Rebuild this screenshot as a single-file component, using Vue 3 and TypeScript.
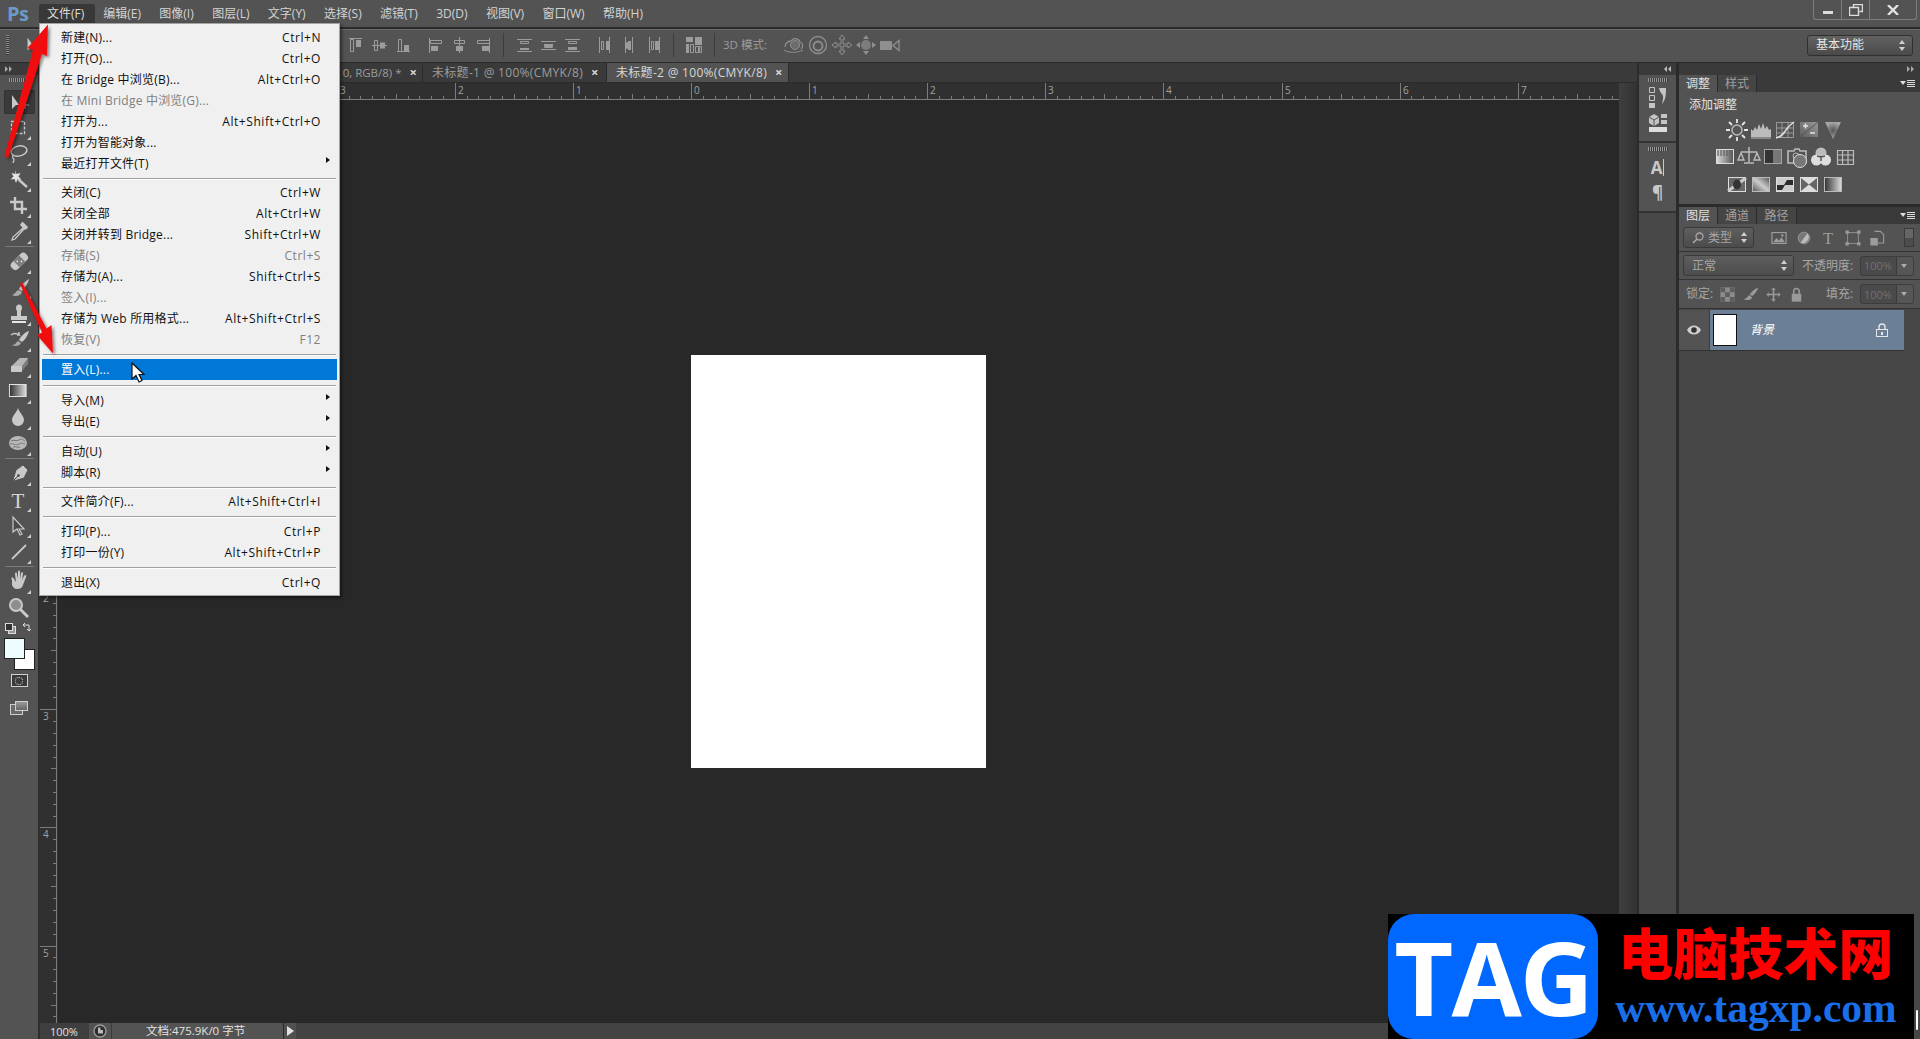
<script setup lang="ts">
interface MenuRow { label?: string; key?: string; off?: boolean; sub?: boolean; active?: boolean; sep?: number }
const menus = ['编辑(E)', '图像(I)', '图层(L)', '文字(Y)', '选择(S)', '滤镜(T)', '3D(D)', '视图(V)', '窗口(W)', '帮助(H)']
const menuRows: MenuRow[] = [
  { label: '新建(N)...', key: 'Ctrl+N' },
  { label: '打开(O)...', key: 'Ctrl+O' },
  { label: '在 Bridge 中浏览(B)...', key: 'Alt+Ctrl+O' },
  { label: '在 Mini Bridge 中浏览(G)...', off: true },
  { label: '打开为...', key: 'Alt+Shift+Ctrl+O' },
  { label: '打开为智能对象...' },
  { label: '最近打开文件(T)', sub: true },
  { sep: 8 },
  { label: '关闭(C)', key: 'Ctrl+W' },
  { label: '关闭全部', key: 'Alt+Ctrl+W' },
  { label: '关闭并转到 Bridge...', key: 'Shift+Ctrl+W' },
  { label: '存储(S)', key: 'Ctrl+S', off: true },
  { label: '存储为(A)...', key: 'Shift+Ctrl+S' },
  { label: '签入(I)...', off: true },
  { label: '存储为 Web 所用格式...', key: 'Alt+Shift+Ctrl+S' },
  { label: '恢复(V)', key: 'F12', off: true },
  { sep: 9 },
  { label: '置入(L)...', active: true },
  { sep: 10 },
  { label: '导入(M)', sub: true },
  { label: '导出(E)', sub: true },
  { sep: 9 },
  { label: '自动(U)', sub: true },
  { label: '脚本(R)', sub: true },
  { sep: 8 },
  { label: '文件简介(F)...', key: 'Alt+Shift+Ctrl+I' },
  { sep: 9 },
  { label: '打印(P)...', key: 'Ctrl+P' },
  { label: '打印一份(Y)', key: 'Alt+Shift+Ctrl+P' },
  { sep: 9 },
  { label: '退出(X)', key: 'Ctrl+Q' }
]

const L = '#c9c9c9'
const corner = `<path d="M24 20v4h-4z" fill="#cfcfcf"/>`
type Tool = { svg: string } | { sep: true }
const tools: Tool[] = [
  { svg: `<path d="M5 5v14l4-4 3 0z" fill="${L}"/><path d="M14 15h8M18 11v8" stroke="#8d8d8d" stroke-width="1.4"/>` },
  { svg: `<rect x="4.500" y="5.500" width="13" height="12" fill="none" stroke="${L}" stroke-width="1.300" stroke-dasharray="3 1.500"/>${corner}` },
  { svg: `<ellipse cx="12" cy="9" rx="8" ry="5" fill="none" stroke="${L}" stroke-width="1.500" transform="rotate(-12 12 9)"/><path d="M6 13c-2 3 1 3 1 5 0 1-1 2-1 3" fill="none" stroke="${L}" stroke-width="1.300"/>${corner}` },
  { svg: `<path d="M8 2l1.500 4 4-1-2 3.500 3 3-4-.5-1.500 4-1.500-4-4 .5 3-3-2-3.500 4 1z" fill="#e4e4e4"/><path d="M11 11l9 8" stroke="${L}" stroke-width="2.400"/>${corner}` },
  { svg: `<path d="M8 3v12h12M3 8h12v12" fill="none" stroke="${L}" stroke-width="2.400"/>${corner}` },
  { svg: `<path d="M16 3l4 4-3 2-1 1-8 9-3 1 1-3 9-8 1-1z" fill="none" stroke="${L}" stroke-width="1.300"/><path d="M15 2l6 6-3 2-5-5z" fill="${L}"/>${corner}` },
  { sep: true },
  { svg: `<g transform="rotate(-45 12 11)"><rect x="2" y="7" width="20" height="9" rx="4" fill="${L}"/><rect x="8" y="7" width="8" height="9" fill="#7d7d7d"/><circle cx="10.500" cy="10" r=".8" fill="#eee"/><circle cx="13.500" cy="13" r=".8" fill="#eee"/></g>${corner}` },
  { svg: `<path d="M22 3c-3 2-8 6-10 10l3 2c3-3 6-8 7-12z" fill="${L}"/><path d="M12 14c-3 0-3 4-7 5 3 2 9 1 10-3z" fill="#aaa"/>${corner}` },
  { svg: `<ellipse cx="12" cy="6" rx="3" ry="3.500" fill="${L}"/><rect x="10" y="8" width="4" height="6" fill="${L}"/><path d="M4 14h16v4H4z" fill="${L}"/><rect x="5" y="19" width="14" height="2" fill="#e6e6e6"/>${corner}` },
  { svg: `<path d="M22 3c-4 1-8 5-10 9l3 2c3-2 6-7 7-11z" fill="${L}"/><path d="M11 13c-2 1-2 4-6 4 3 2 8 1 9-2z" fill="#aaa"/><path d="M4 7c2-2 6-2 8 0l-2 0M12 7V4" fill="none" stroke="${L}" stroke-width="1.500"/>${corner}` },
  { svg: `<path d="M13 4h8l-6 8H4v1z" fill="#e2e2e2"/><path d="M13 4l-9 8v6h10l7-8V4z" fill="#9a9a9a" opacity=".6"/><path d="M4 12h11v6H4z" fill="${L}"/>${corner}` },
  { svg: `<defs><linearGradient id="tg" x1="0" x2="1"><stop offset="0" stop-color="#2d2d2d"/><stop offset="1" stop-color="#dedede"/></linearGradient></defs><rect x="2.500" y="4.500" width="17" height="12" transform="scale(.98 1)" fill="url(#tg)" stroke="#e2e2e2"/>${corner}` },
  { svg: `<path d="M11 2c1 4 6 8 6 12a6 6 0 0 1-12 0c0-4 5-8 6-12z" fill="${L}"/>${corner}` },
  { svg: `<ellipse cx="11" cy="11" rx="9" ry="7" fill="#b8b8b8"/><path d="M4 9c3-2 5 1 8-1s4 0 6 1M3 12c4-1 5 2 9 0s4 0 6 0M6 15c3-1 4 1 7 0" stroke="#777" fill="none"/>${corner}` },
  { sep: true },
  { svg: `<path d="M16 3l5 5-4 8-10 3-3 2 2-3 3-10z" fill="${L}" stroke="#555"/><path d="M5 20l6-6" stroke="#444"/><circle cx="11.500" cy="13.500" r="1.300" fill="#444"/>${corner}` },
  { svg: `<text x="11" y="20" text-anchor="middle" font-family="Liberation Serif,serif" font-size="21" fill="#d6d6d6">T</text>${corner}` },
  { svg: `<path d="M6 3v15l4-3 3 6 2-1-3-5h5z" fill="#4b4b4b" stroke="${L}" stroke-width="1.200"/>${corner}` },
  { svg: `<path d="M5 19L19 5" stroke="${L}" stroke-width="1.800"/>${corner}` },
  { sep: true },
  { svg: `<path d="M5 10c-2-3 1-3 2-1l2 3-1-8c0-2 2-2 2 0l1 5V2c0-2 2-2 2 0v7l1-6c1-2 2-1 2 1l-1 6 2-4c1-2 3-1 2 1l-3 8c-1 3-3 4-6 4s-4-2-5-4z" fill="${L}"/>${corner}` },
  { svg: `<circle cx="9" cy="9" r="6" fill="#8e8e8e" stroke="${L}" stroke-width="2"/><path d="M13 13l8 8" stroke="${L}" stroke-width="3"/>` }
]

const A = '#9c9c9c'
const al = (d: string, fill: string, outline: string) => `<path d="${d}" stroke="${A}" fill="none"/><path d="${fill}" fill="${A}"/><path d="${outline}" fill="none" stroke="${A}"/>`
const alignA = [
  al('M6 5.500h13', 'M13 7h5v7h-5z', 'M7.500 6.500h3v12h-3z'),
  al('M5 12.500h15', 'M13 9.500h5v6h-5z', 'M7.500 7.500h3v10h-3z'),
  al('M6 18.500h13', 'M13 12h5v6h-5z', 'M7.500 6.500h3v12h-3z'),
  al('M6.500 5v15', 'M8 13h7v5H8z', 'M7.500 7.500h11v3h-11z'),
  al('M12.500 4v16', 'M9 13h7v5H9z', 'M7.500 7.500h10v3h-10z'),
  al('M18.500 5v15', 'M11 13h7v5h-7z', 'M6.500 7.500h12v3h-12z')
]
const alignB = [
  al('M5 6.500h15M5 18.500h15', 'M8 15h9v2H8z', 'M8.500 8.500h8v2h-8z'),
  al('M5 8.500h15M5 16.500h15', 'M8 11h9v2H8z', 'M8.500 13.500h8v1h-8z'),
  al('M5 6.500h15M5 18.500h15', 'M8 14h9v3H8z', 'M8.500 8.500h8v2h-8z'),
  al('M6.500 4v16M16.500 4v16', 'M13 8h3v9h-3z', 'M8.500 8.500h2v8h-2z'),
  al('M8.500 4v16M15.500 4v16', 'M11 8h3v9h-3z', 'M9.500 9.500h1v6h-1z'),
  al('M8.500 4v16M18.500 4v16', 'M14 8h4v9h-4z', 'M10.500 8.500h2v8h-2z')
]
const autoAlign = `<path d="M4 4h7v5H4zM13 4h7v8h-7zM4 11h3v9H4z" fill="${A}"/><path d="M8.500 11.500h3v8h-3zM13.500 13.500h3v6h-3zM17.500 13.500h2v6h-2z" fill="none" stroke="${A}"/>`
const M = '#8f8f8f'
const mode3d = [
  `<path d="M3 14a6 6 0 0 1 6-6 5 5 0 0 1 9 1 4 4 0 0 1 1 7" fill="none" stroke="${M}" stroke-width="1.300"/><circle cx="13" cy="12" r="4.500" fill="#6c6c6c" stroke="${M}"/><path d="M2 17c4 3 14 3 19 0" fill="none" stroke="${M}"/>`,
  `<circle cx="12" cy="12" r="8.500" fill="none" stroke="${M}" stroke-width="1.300"/><circle cx="12" cy="13" r="4.500" fill="none" stroke="${M}" stroke-width="1.800"/>`,
  `<path d="M12 2l3 4h-2v5h5V9l4 3-4 3v-2h-5v5h2l-3 4-3-4h2v-5H6v2l-4-3 4-3v2h5V6H9z" fill="none" stroke="${M}"/>`,
  `<path d="M12 2l3 4h-6zM12 22l-3-4h6zM2 12l4-3v6zM22 12l-4 3V9z" fill="${M}"/><circle cx="12" cy="12" r="5" fill="#7c7c7c"/>`,
  `<rect x="2" y="8" width="12" height="9" rx="1" fill="${M}"/><path d="M15 12.500l6-5v10z" fill="none" stroke="${M}" stroke-width="1.300"/>`
]

const P = '#bcbcbc'
const adj1 = [
  `<circle cx="12" cy="12" r="5" fill="#555" stroke="${P}" stroke-width="1.500"/><path d="M12 1v4M12 19v4M1 12h4M19 12h4M4 4l3 3M17 17l3 3M20 4l-3 3M7 17l-3 3" stroke="#e6e6e6" stroke-width="1.800"/>`,
  `<path d="M2 19v-8l2 2 2-4 2 3 2-6 2 5 2-6 2 6 2-3 2 4 2-1v8z" fill="${P}"/><rect x="2" y="19" width="20" height="2" fill="#888"/>`,
  `<path d="M3.500 4.500h17v15h-17zM9 4v16M15 4v16M3 10h18M3 15h18" fill="none" stroke="#9a9a9a"/><path d="M3 20c6-1 8-5 10-8s5-6 8-8" fill="none" stroke="#e4e4e4" stroke-width="1.500"/>`,
  `<rect x="3" y="4" width="18" height="15" fill="url(#pg1)"/><path d="M6 8h5M8.500 5.500v5M13 15h5" stroke="#e2e2e2" stroke-width="1.500"/><path d="M3 19L21 4" stroke="#555"/>`,
  `<path d="M4 4h16l-8 17z" fill="url(#pg2)"/>`
]
const adj2 = [
  `<rect x="3.500" y="4.500" width="17" height="14" fill="url(#pg3)" stroke="#ddd"/><path d="M5 5v6M8 5v6M11 5v6M14 5v6M17 5v6" stroke="#666" stroke-width="1.300"/>`,
  `<path d="M12 2v15M4 7h16M7 18h10" stroke="${P}" stroke-width="1.500"/><path d="M4 8l-3 7h6zM20 8l-3 7h6z" fill="none" stroke="${P}" stroke-width="1.400"/>`,
  `<rect x="3.500" y="4.500" width="17" height="14" fill="#777" stroke="#a6a6a6"/><rect x="4" y="5" width="8" height="13" fill="#333"/>`,
  `<path d="M3 6h6l1-2h4l1 2h6v12H3z" fill="none" stroke="${P}" stroke-width="1.600"/><circle cx="11" cy="11" r="3" fill="none" stroke="${P}"/><circle cx="15" cy="16" r="6.500" fill="#777" stroke="#ddd"/>`,
  `<circle cx="12" cy="8" r="5.500" fill="${P}"/><circle cx="7.500" cy="15" r="5.500" fill="#dedede"/><circle cx="16.500" cy="15" r="5.500" fill="#dedede"/><path d="M12 12v4M8 11l4 1 4-1" stroke="#555" stroke-width="1.500"/>`,
  `<path d="M4.500 5.500h16v14h-16zM9.500 5v15M15 5v15M4 10h17M4 15h17" fill="none" stroke="${P}" stroke-width="1.200"/>`
]
const adj3 = [
  `<rect x="3.500" y="4.500" width="17" height="14" fill="#666" stroke="#ddd"/><path d="M3 18L21 5" stroke="#ccc" stroke-width="3"/><ellipse cx="12" cy="11.500" rx="4" ry="5" fill="#333"/>`,
  `<rect x="3.500" y="4.500" width="17" height="14" fill="url(#pg4)" stroke="#bbb"/>`,
  `<rect x="3.500" y="4.500" width="17" height="14" fill="#ccc" stroke="#ddd"/><path d="M4 17h5l3-5h8V7h-6l-3 5H4z" fill="#2c2c2c"/>`,
  `<rect x="3.500" y="4.500" width="17" height="14" fill="#ddd" stroke="#ddd"/><path d="M4 5l16 13V5L4 18z" fill="#666"/>`,
  `<rect x="3.500" y="4.500" width="17" height="14" fill="url(#pg5)" stroke="#bbb"/>`
]
const layerIcons = [
  `<rect x="3.500" y="5.500" width="17" height="13" fill="none" stroke="${A}" stroke-width="1.400"/><path d="M5 17l4-5 3 3 3-4 4 6z" fill="${A}"/><circle cx="16" cy="9" r="1.500" fill="${A}"/>`,
  `<circle cx="12" cy="12" r="7" fill="#777" stroke="${A}"/><path d="M16 6.500a7 7 0 0 1-8 11z" fill="#bbb"/>`,
  `<text x="12" y="19" text-anchor="middle" font-family="Liberation Serif,serif" font-size="20" fill="${A}">T</text>`,
  `<path d="M5.500 5.500h13v13h-13z" fill="none" stroke="${A}"/><path d="M3 3h4v4H3zM17 3h4v4h-4zM3 17h4v4H3zM17 17h4v4h-4z" fill="${A}"/>`,
  `<path d="M9 4h7l4 4v10h-7" fill="none" stroke="${A}" stroke-width="1.300"/><rect x="4" y="12" width="9" height="9" fill="${A}"/>`
]
const lockIcons = [
  `<rect x="3" y="3" width="18" height="18" fill="#8c8c8c"/><path d="M3 3h6v6H3zM15 3h6v6h-6zM9 9h6v6H9zM3 15h6v6H3zM15 15h6v6h-6z" fill="#5e5e5e"/>`,
  `<path d="M22 3c-5 2-9 5-11 9l3 2c3-2 6-6 8-11z" fill="#9a9a9a"/><path d="M11 13c-3 0-2 4-8 5 4 2 10 1 11-2z" fill="#9a9a9a"/>`,
  `<path d="M12 3l3 3h-2v5h5V9l3 3-3 3v-2h-5v5h2l-3 3-3-3h2v-5H6v2l-3-3 3-3v2h5V6H9z" fill="#9a9a9a"/>`,
  `<rect x="6" y="11" width="12" height="10" fill="#9a9a9a"/><path d="M8.500 11V8a3.500 3.500 0 0 1 7 0v3" fill="none" stroke="#9a9a9a" stroke-width="2"/>`
]

const hW = 1561, hX0 = 633, vH = 923, vY0 = 255, inch = 118.1
const hMajor: { x: number; n: number }[] = []
const hMinor: { x: number; mid: boolean }[] = []
for (let i = -3; i <= 7; i++) {
  hMajor.push({ x: Math.round(hX0 + i * inch), n: Math.abs(i) })
  for (let j = 1; j < 10; j++) hMinor.push({ x: Math.round(hX0 + (i + j / 10) * inch), mid: j === 5 })
}
const vMajor: { y: number; n: number }[] = []
const vMinor: { y: number; mid: boolean }[] = []
for (let i = 2; i <= 5; i++) {
  vMajor.push({ y: Math.round(vY0 + i * inch), n: Math.abs(i) })
  for (let j = 1; j < 10; j++) vMinor.push({ y: Math.round(vY0 + (i + j / 10) * inch), mid: j === 5 })
}
</script>

<template>
  <div class="ps">
    <header class="menubar">
      <span class="logo">Ps</span>
      <span class="mitem current">文件(F)</span>
      <span v-for="m in menus" :key="m" class="mitem">{{ m }}</span>
      <div class="winctl">
        <span class="wbtn"><i class="wmin"></i></span>
        <span class="wbtn mid"><svg width="14" height="12" viewBox="0 0 14 12"><path d="M4.500 3.500v-3h9v7h-3M.5 3.500h9v8h-9z" fill="none" stroke="#ddd" stroke-width="1.400"/></svg></span>
        <span class="wbtn big"><svg width="12" height="10" viewBox="0 0 12 10"><path d="M1 0l10 10M11 0L1 10" stroke="#e2e2e2" stroke-width="2.400"/></svg></span>
      </div>
    </header>

    <div class="optbar">
      <span class="grip-v"></span>
      <svg class="o-icon" width="22" height="24" viewBox="0 0 24 24"><path d="M5 4v14l4-4 3 0z" fill="#c9c9c9"/><path d="M14 15h8M18 11v8" stroke="#8d8d8d" stroke-width="1.400"/></svg>
      <div class="o-group g1"><svg v-for="(s, i) in alignA.slice(0, 3)" :key="i" class="o24" viewBox="0 0 24 24" v-html="s"></svg></div>
      <div class="o-group g8"><svg v-for="(s, i) in alignA.slice(3)" :key="i" class="o24" viewBox="0 0 24 24" v-html="s"></svg></div>
      <i class="o-div"></i>
      <div class="o-group"><svg v-for="(s, i) in alignB.slice(0, 3)" :key="i" class="o24" viewBox="0 0 24 24" v-html="s"></svg></div>
      <div class="o-group g9"><svg v-for="(s, i) in alignB.slice(3)" :key="i" class="o24" viewBox="0 0 24 24" v-html="s"></svg></div>
      <i class="o-div"></i>
      <svg class="o24" viewBox="0 0 24 24" v-html="autoAlign"></svg>
      <i class="o-div"></i>
      <span class="mode3d">3D 模式:</span>
      <div class="o-group g3d"><svg v-for="(s, i) in mode3d" :key="i" class="o24" viewBox="0 0 24 24" v-html="s"></svg></div>
      <div class="workspace"><span>基本功能</span><i class="updown"></i></div>
    </div>

    <div class="main">
      <aside class="toolbar">
        <div class="t-head"><svg width="8" height="6" viewBox="0 0 8 6"><path d="M0 0l3 3-3 3zM4 0l3 3-3 3z" fill="#aaa"/></svg></div>
        <div class="grip-h"></div>
        <template v-for="(t, i) in tools" :key="i">
          <div v-if="'sep' in t" class="t-sep"></div>
          <div v-else class="tool" :class="{ on: i === 0 }">
            <svg width="24" height="24" viewBox="0 0 24 24" v-html="t.svg"></svg>
          </div>
        </template>
        <div class="mini">
          <svg width="28" height="14" viewBox="0 0 28 14"><rect x="4.500" y="4.500" width="7" height="7" fill="#999" stroke="#ddd"/><rect x="1.500" y="1.500" width="7" height="7" fill="#333" stroke="#ddd"/><path d="M19 3h6v6M19 3l2-2M19 3l2 2M25 9l-2-2M25 9l2-2" fill="none" stroke="#ddd"/></svg>
        </div>
        <div class="swatches"><i class="bg"></i><i class="fg"></i></div>
        <div class="qmask"><i></i></div>
        <div class="screen"><i class="s1"></i><i class="s2"></i></div>
      </aside>

      <section class="doc">
        <div class="tabs">
          <div class="tab first"><span>0, RGB/8) *</span><b>×</b></div>
          <div class="tab"><span>未标题-1 @ 100%(CMYK/8)</span><b>×</b></div>
          <div class="tab active"><span>未标题-2 @ 100%(CMYK/8)</span><b>×</b></div>
        </div>
        <div class="work">
          <div class="work-main">
            <div class="hruler-row">
              <div class="corner"></div>
              <svg class="hruler" :width="hW" height="17" :viewBox="`0 0 ${hW} 17`">
                <rect x="0" y="16" :width="hW" height="1" fill="#7c7c7c"/>
                <rect v-for="m in hMajor" :key="m.x" :x="m.x" y="0" width="1" height="16" fill="#7c7c7c"/>
                <rect v-for="m in hMinor" :key="m.x" :x="m.x" :y="m.mid ? 11 : 13" width="1" :height="m.mid ? 5 : 3" fill="#7c7c7c"/>
                <text v-for="m in hMajor" :key="'t' + m.x" :x="m.x + 3" y="11" class="rlabel">{{ m.n }}</text>
              </svg>
            </div>
            <div class="canvas-row">
              <svg class="vruler" width="18" :height="vH" :viewBox="`0 0 18 ${vH}`">
                <rect x="16" y="0" width="1" :height="vH" fill="#7c7c7c"/>
                <rect v-for="m in vMajor" :key="m.y" x="0" :y="m.y" width="16" height="1" fill="#7c7c7c"/>
                <rect v-for="m in vMinor" :key="m.y" :x="m.mid ? 11 : 13" :y="m.y" :width="m.mid ? 5 : 3" height="1" fill="#7c7c7c"/>
                <text v-for="m in vMajor" :key="'t' + m.y" x="3" :y="m.y + 11" class="rlabel">{{ m.n }}</text>
              </svg>
              <div class="canvas"><div class="page"></div></div>
            </div>
            <footer class="status">
              <span class="zoomv">100%</span>
              <span class="clock"><svg width="14" height="14" viewBox="0 0 14 14"><circle cx="7" cy="7" r="6" fill="#2c2c2c" stroke="#9a9a9a" stroke-width="1.400"/><path d="M5 3.500v6h5V6H7.500V3.500z" fill="#bbb"/></svg></span>
              <span class="info">文档:475.9K/0 字节</span>
              <span class="sarrow"><svg width="7" height="10" viewBox="0 0 7 10"><path d="M0 0l7 5-7 5z" fill="#e2e2e2"/></svg></span>
            </footer>
          </div>
          <div class="vscroll"></div>
        </div>
      </section>

      <aside class="dock">
        <div class="d-head"><svg width="8" height="6" viewBox="0 0 8 6"><path d="M3 0L0 3l3 3zM7 0L4 3l3 3z" fill="#bbb"/></svg></div>
        <div class="d-group h68">
          <div class="grip-h narrow"></div>
          <svg class="d-ic" width="24" height="24" viewBox="0 0 24 24"><path d="M3.500 2.500h5v5h-5zM3.500 10.500h5v5h-5z" fill="none" stroke="#c4c4c4"/><rect x="3" y="18" width="6" height="5" fill="#c4c4c4"/><path d="M13 3h7c0 5 0 12-4 16 1-5 2-7 0-10-1-1-2-2-3-6z" fill="#c4c4c4"/></svg>
          <svg class="d-ic" width="24" height="24" viewBox="0 0 24 24"><path d="M3 6l5-3 5 3v6l-5 3-5-3z" fill="#c4c4c4"/><path d="M3 6l5 3 5-3M8 9v6" stroke="#555" fill="none"/><path d="M15 3h6v4h-6zM15 9h6v4h-6z" fill="#c4c4c4"/><rect x="3" y="16" width="18" height="5" fill="#ddd"/></svg>
        </div>
        <div class="d-group h69">
          <div class="grip-h narrow"></div>
          <span class="d-a">A<i></i></span>
          <span class="d-p">¶</span>
        </div>
      </aside>

      <aside class="panels">
        <div class="p-head"><svg width="8" height="6" viewBox="0 0 8 6"><path d="M0 0l3 3-3 3zM4 0l3 3-3 3z" fill="#aaa"/></svg></div>
        <section class="panel adjust">
          <div class="p-tabs">
            <span class="p-tab on">调整</span><span class="p-tab">样式</span>
            <span class="p-menu"><i class="tri"></i><i class="lines"></i></span>
          </div>
          <div class="adj-body">
            <div class="adj-title">添加调整</div>
            <div class="adj-row"><svg v-for="(s, i) in adj1" :key="i" class="a24" viewBox="0 0 24 24" v-html="s"></svg></div>
            <div class="adj-row"><svg v-for="(s, i) in adj2" :key="i" class="a24" viewBox="0 0 24 24" v-html="s"></svg></div>
            <div class="adj-row"><svg v-for="(s, i) in adj3" :key="i" class="a24" viewBox="0 0 24 24" v-html="s"></svg></div>
          </div>
        </section>
        <section class="panel layers">
          <div class="p-tabs">
            <span class="p-tab on">图层</span><span class="p-tab">通道</span><span class="p-tab wide">路径</span>
            <span class="p-menu"><i class="tri"></i><i class="lines"></i></span>
          </div>
          <div class="l-row filter">
            <div class="sel s-filter">
              <svg width="12" height="12" viewBox="0 0 12 12"><circle cx="7.500" cy="4.500" r="3.500" fill="none" stroke="#a8a8a8" stroke-width="1.300"/><path d="M5 7l-4 4" stroke="#a8a8a8" stroke-width="1.600"/></svg>
              <span>类型</span><i class="updown"></i>
            </div>
            <div class="f-icons"><svg v-for="(s, i) in layerIcons" :key="i" class="f24" viewBox="0 0 24 24" v-html="s"></svg></div>
            <span class="switch"></span>
          </div>
          <div class="l-row blend">
            <div class="sel s-blend"><span>正常</span><i class="updown"></i></div>
            <span class="l-label op">不透明度:</span>
            <div class="num"><span>100%</span><i class="caret"></i></div>
          </div>
          <div class="l-row lock">
            <span class="l-label lk">锁定:</span>
            <div class="l-icons"><svg v-for="(s, i) in lockIcons" :key="i" class="l20" viewBox="0 0 24 24" v-html="s"></svg></div>
            <span class="l-label fl">填充:</span>
            <div class="num"><span>100%</span><i class="caret"></i></div>
          </div>
          <div class="layer-wrap">
            <div class="layer">
              <div class="eye"><svg width="14" height="10" viewBox="0 0 14 10"><path d="M0 5c3-6 11-6 14 0-3 6-11 6-14 0z" fill="#cfcfcf"/><circle cx="7" cy="5" r="2.800" fill="#333"/></svg></div>
              <div class="lrow">
                <div class="thumb"></div>
                <span class="lname">背景</span>
                <svg class="llock" width="12" height="14" viewBox="0 0 12 14"><path d="M3 6V4a3 3 0 0 1 6 0v2" fill="none" stroke="#e6e6e6" stroke-width="1.400"/><rect x=".5" y="6.500" width="11" height="7" fill="#6b7f96" stroke="#e6e6e6"/><rect x="5" y="9" width="2" height="3" fill="#e6e6e6"/></svg>
              </div>
            </div>
          </div>
        </section>
      </aside>
    </div>

    <div class="filemenu">
      <template v-for="(r, i) in menuRows" :key="i">
        <div v-if="r.sep" class="msep" :style="{ height: r.sep + 'px' }"><i></i></div>
        <div v-else class="mrow" :class="{ off: r.off, active: r.active }">
          <span>{{ r.label }}</span><span class="key">{{ r.key }}</span>
          <i v-if="r.sub" class="subarrow"></i>
        </div>
      </template>
    </div>

    <svg class="overlay" width="1920" height="1039" viewBox="0 0 1920 1039">
      <defs>
        <linearGradient id="pg1" x1="0" x2="1" y1="1" y2="0"><stop offset="0" stop-color="#5e5e5e"/><stop offset="1" stop-color="#999"/></linearGradient>
        <radialGradient id="pg2"><stop offset="0" stop-color="#555"/><stop offset="1" stop-color="#a8a8a8"/></radialGradient>
        <linearGradient id="pg3" x1="0" x2="1"><stop offset="0" stop-color="#ddd"/><stop offset="1" stop-color="#555"/></linearGradient>
        <linearGradient id="pg4" x1="0" x2="1" y1="1" y2="0"><stop offset="0" stop-color="#555"/><stop offset=".5" stop-color="#ccc"/><stop offset="1" stop-color="#555"/></linearGradient>
        <linearGradient id="pg5" x1="0" x2="1"><stop offset="0" stop-color="#333"/><stop offset="1" stop-color="#ddd"/></linearGradient>
        <filter id="ds" x="-50%" y="-50%" width="200%" height="200%"><feDropShadow dx="2" dy="2" stdDeviation="1.500" flood-color="#000" flood-opacity=".45"/></filter>
      </defs>
      <g filter="url(#ds)" fill="#ef1111">
        <path d="M4.500 156L33 50l-5.500-2L48 24.500 47 56l-5-2L8 158z"/>
        <path d="M22 282l24.500 46.500 5-3.500 1.500 28.500L37 335l5-2.500L20 284z"/>
      </g>
      <path d="M132 363v16l4-3.500 3 6.500 3-1.500-3-6h5z" fill="#fff" stroke="#111" stroke-width="1.200"/>
    </svg>

    <div class="watermark">
      <div class="tag">TAG</div>
      <div class="wm-right">
        <div class="wm-cn">电脑技术网</div>
        <div class="wm-url">www.tagxp.com</div>
      </div>
      <i class="wm-sliver"></i>
    </div>
  </div>
</template>

<style>
html, body { margin: 0; background: #282828; }
</style>

<style scoped>
.ps { position: relative; width: 1920px; height: 1039px; overflow: hidden; display: flex; flex-direction: column; background: #535353; color: #d4d4d4; font: 12px/1 "Open Sans", "Noto Sans CJK SC", sans-serif; }
i { display: block; font-style: normal; }
.menubar { height: 27px; flex: none; display: flex; align-items: center; background: #535353; position: relative; border-bottom: 2px solid #2b2b2b; }
.logo { width: 39px; padding-left: 7px; box-sizing: border-box; font: 700 20px/1 "Open Sans", sans-serif; color: #6c9ac9; letter-spacing: -0.5px; }
.mitem { padding: 0 9.200px; height: 20px; display: flex; align-items: center; color: #d4d4d4; white-space: nowrap; }
.mitem.current { background: #383838; border-radius: 2px; width: 56px; box-sizing: border-box; padding: 0 8px; color: #ddd; margin-right: -1px; }
.winctl { margin-left: auto; margin-right: 3px; align-self: flex-start; display: flex; height: 19px; border: 1px solid #7d7d7d; border-top: 0; border-radius: 0 0 3px 3px; }
.wbtn { width: 27px; display: flex; align-items: center; justify-content: center; border-right: 1px solid #7d7d7d; }
.wbtn.big { width: 46px; border-right: 0; }
.wmin { width: 10px; height: 3px; background: #ddd; margin-top: 5px; }
.optbar { height: 34px; flex: none; display: flex; align-items: center; background: #535353; border-top: 1px solid #6a6a6a; border-bottom: 1px solid #2b2b2b; box-sizing: border-box; padding: 0 0 2px 6px; }
.grip-v { width: 3px; height: 20px; background: repeating-linear-gradient(#8a8a8a 0 1px, #3a3a3a 1px 2px); }
.o-icon { margin-left: 14px; }
.o24 { width: 24px; height: 24px; flex: none; }
.o-group { display: flex; flex: none; }
.g1 { margin-left: 298px; }
.g8 { margin-left: 8px; }
.g9 { margin-left: 9px; }
.g3d { margin-left: 14px; }
.o-div { width: 1px; height: 24px; background: #3c3c3c; margin: 0 8px; flex: none; }
.mode3d { color: #9c9c9c; font-size: 11.500px; width: 45px; white-space: nowrap; }
.workspace { margin-left: auto; margin-right: 7px; width: 106px; height: 21px; box-sizing: border-box; background: linear-gradient(#626262, #4a4a4a); border: 1px solid #303030; border-radius: 3px; display: flex; align-items: center; padding: 0 6px 0 8px; color: #e4e4e4; justify-content: space-between; }
.updown { width: 7px; height: 11px; position: relative; }
.updown::before, .updown::after { content: ""; position: absolute; left: 0; border-left: 3.500px solid transparent; border-right: 3.500px solid transparent; }
.updown::before { top: 0; border-bottom: 4px solid #d0d0d0; }
.updown::after { bottom: 0; border-top: 4px solid #d0d0d0; }
.main { flex: 1; min-height: 0; display: flex; background: #2b2b2b; }
.toolbar { width: 38px; flex: none; background: #535353; display: flex; flex-direction: column; align-items: center; border-right: 2px solid #2e2e2e; box-sizing: content-box; }
.t-head { height: 12px; width: 100%; background: #3a3a3a; flex: none; display: flex; align-items: center; padding-left: 5px; box-sizing: border-box; }
.grip-h { height: 4px; width: 20px; margin: 3px auto 7px; flex: none; background: repeating-linear-gradient(90deg, #9a9a9a 0 1px, #3a3a3a 1px 2px); }
.grip-h.narrow { margin: 3px auto 1px; }
.tool { height: 26px; width: 31px; flex: none; display: flex; align-items: center; justify-content: center; }
.tool.on { background: #3a3a3a; border-radius: 2px; height: 24px; margin: 1px 0; box-shadow: inset 0 0 0 1px #333; }
.t-sep { height: 4px; width: 29px; flex: none; position: relative; }
.t-sep::after { content: ""; position: absolute; left: 0; right: 0; top: 1px; height: 1px; background: #7a7a7a; }
.mini { height: 14px; width: 30px; margin-top: 1px; flex: none; }
.swatches { width: 30px; height: 30px; position: relative; flex: none; margin-top: 2px; }
.swatches i { position: absolute; width: 19px; height: 19px; border: 1px solid #222; }
.swatches .bg { left: 10px; top: 11px; background: #fff; }
.swatches .fg { left: 0; top: 0; background: #edfcff; }
.qmask { width: 17px; height: 13px; margin-top: 6px; box-sizing: border-box; border: 1px solid #d0d0d0; background: #3a3a3a; display: flex; align-items: center; justify-content: center; flex: none; }
.qmask i { width: 8px; height: 8px; border-radius: 50%; border: 1px dotted #ddd; box-sizing: border-box; }
.screen { width: 18px; height: 14px; margin-top: 14px; position: relative; flex: none; }
.screen .s1 { position: absolute; left: 0; top: 3px; width: 11px; height: 9px; border: 1px solid #cfcfcf; background: #6a6a6a; }
.screen .s2 { position: absolute; left: 5px; top: 0; width: 11px; height: 8px; border: 1px solid #cfcfcf; background: linear-gradient(#999, #666); }
.doc { flex: 1; min-width: 0; display: flex; flex-direction: column; }
.tabs { height: 19px; flex: none; display: flex; background: #3a3a3a; border-bottom: 1px solid #2b2b2b; padding-left: 44px; box-sizing: content-box; color: #9c9c9c; }
.tab { display: flex; align-items: center; width: 184px; box-sizing: border-box; padding-left: 9px; border-right: 1px solid #2b2b2b; white-space: nowrap; font-size: 12px; letter-spacing: .3px; }
.tab.first { width: 339px; justify-content: flex-end; padding-right: 5px; font-size: 11.500px; letter-spacing: 0; }
.tab b { font-weight: 700; font-size: 13px; margin-left: 8px; color: #d6d6d6; }
.tab.active { background: #535353; color: #d8d8d8; width: 182px; }
.work { flex: 1; min-height: 0; display: flex; }
.work-main { width: 1579px; flex: none; display: flex; flex-direction: column; }
.hruler-row { display: flex; height: 17px; flex: none; background: #303030; }
.corner { width: 18px; flex: none; }
.hruler { display: block; flex: none; background: #303030; }
.rlabel { font: 10px "Open Sans", sans-serif; fill: #a2a2a2; }
.canvas-row { flex: 1; min-height: 0; display: flex; }
.vruler { display: block; flex: none; background: #303030; }
.canvas { width: 1561px; flex: none; display: flex; align-items: center; justify-content: center; background: #282828; }
.page { width: 295px; height: 413px; background: #fff; }
.status { height: 16px; flex: none; display: flex; align-items: center; background: #434343; color: #e2e2e2; }
.zoomv { width: 49px; padding-left: 10px; box-sizing: border-box; font-size: 11px; height: 100%; display: flex; align-items: center; background: #3f3f3f; }
.clock { width: 23px; height: 100%; background: #535353; display: flex; align-items: center; justify-content: center; border-right: 1px solid #3a3a3a; box-sizing: border-box; }
.info { width: 171px; padding-left: 34px; box-sizing: border-box; height: 100%; display: flex; align-items: center; white-space: nowrap; background: #535353; font-size: 11.500px; }
.sarrow { width: 13px; height: 100%; display: flex; align-items: center; justify-content: center; background: #505050; border-left: 1px solid #2b2b2b; box-sizing: border-box; }
.vscroll { width: 18px; flex: none; background: linear-gradient(90deg, #3f3f3f, #323232); }
.dock { width: 37px; margin-left: 2px; flex: none; background: #484848; display: flex; flex-direction: column; align-items: center; }
.d-head { height: 12px; width: 100%; background: #3a3a3a; display: flex; align-items: center; justify-content: flex-end; padding-right: 4px; box-sizing: border-box; flex: none; }
.d-group { width: 100%; background: #535353; border-bottom: 2px solid #333; display: flex; flex-direction: column; align-items: center; flex: none; box-sizing: border-box; }
.h68 { height: 68px; }
.h69 { height: 70px; padding-top: 1px; }
.d-ic { margin-top: 2px; }
.d-a { font: 700 17px/1 "Open Sans", sans-serif; color: #c9c9c9; margin-top: 2px; height: 26px; display: flex; align-items: center; }
.d-a i { width: 1px; height: 17px; background: #c9c9c9; margin-left: 1px; }
.d-p { font: 700 17px/1 "Open Sans", sans-serif; color: #c9c9c9; margin-top: 4px; }
.panels { width: 241px; margin-left: 3px; flex: none; display: flex; flex-direction: column; background: #464646; }
.p-head { height: 12px; background: #3a3a3a; display: flex; align-items: center; justify-content: flex-end; padding-right: 5px; flex: none; }
.panel { flex: none; }
.p-tabs { height: 17px; display: flex; background: #3a3a3a; position: relative; }
.p-tab { width: 39px; display: flex; align-items: center; justify-content: center; color: #a0a0a0; font-size: 12px; background: #454545; border-right: 1px solid #2b2b2b; box-sizing: border-box; }
.p-tab.on { background: #535353; color: #e0e0e0; }
.p-tab.wide { width: 40px; }
.p-menu { position: absolute; right: 5px; top: 5px; display: flex; gap: 1px; }
.tri { width: 0; height: 0; border-left: 3.500px solid transparent; border-right: 3.500px solid transparent; border-top: 4px solid #ddd; margin-top: 1px; }
.lines { width: 8px; height: 7px; background: repeating-linear-gradient(#ddd 0 1px, #3a3a3a 1px 2px); }
.adj-body { height: 112px; background: #535353; border-bottom: 3px solid #2b2b2b; box-sizing: content-box; display: flex; flex-direction: column; align-items: stretch; }
.adj-title { color: #e4e4e4; padding: 7px 0 0 10px; height: 17px; box-sizing: content-box; }
.adj-row { display: flex; justify-content: center; width: 212px; height: 27.500px; align-items: center; }
.a24 { width: 24px; height: 24px; flex: none; }
.l-row { display: flex; align-items: center; background: #535353; border-bottom: 1px solid #333; box-sizing: border-box; }
.filter { height: 28px; padding-left: 4px; }
.blend { height: 28px; padding-left: 4px; }
.lock { height: 29px; }
.sel { height: 21px; box-sizing: border-box; background: linear-gradient(#5e5e5e, #4c4c4c); border: 1px solid #3a3a3a; border-radius: 3px; display: flex; align-items: center; color: #a6a6a6; padding: 0 5px 0 8px; }
.sel .updown { margin-left: auto; }
.s-filter { width: 71px; gap: 4px; }
.s-blend { width: 111px; }
.f-icons { display: flex; margin-left: 15px; }
.f24 { width: 20px; height: 20px; margin-right: 4.500px; flex: none; }
.switch { width: 8px; height: 17px; margin-left: 12px; background: linear-gradient(#666 0 50%, #333 50% 52%, #4c4c4c 52%); border: 1px solid #3a3a3a; }
.l-label { color: #a6a6a6; font-size: 12px; white-space: nowrap; }
.op { margin-left: 8px; width: 58px; }
.lk { margin-left: 7px; width: 32px; }
.fl { margin-left: 20px; width: 34px; }
.num { width: 54px; height: 20px; box-sizing: border-box; border: 1px solid #3c3c3c; border-radius: 3px; background: linear-gradient(90deg, #4a4a4a 0 35px, #3a3a3a 35px 36px, #565656 36px); display: flex; align-items: center; color: #717171; font-size: 11px; padding-left: 3px; position: relative; }
.caret { position: absolute; right: 6px; top: 7px; border-left: 3.500px solid transparent; border-right: 3.500px solid transparent; border-top: 4px solid #aaa; }
.l-icons { display: flex; gap: 4px; }
.l20 { width: 19px; height: 19px; flex: none; }
.layer-wrap { display: flex; padding-top: 1px; }
.layer { width: 225px; display: flex; height: 40px; border-bottom: 1px solid #333; background: #535353; }
.eye { width: 30px; display: flex; align-items: center; justify-content: center; border-right: 1px solid #3c3c3c; flex: none; }
.lrow { flex: 1; background: #6b7f96; display: flex; align-items: center; padding-left: 3px; }
.thumb { width: 24px; height: 32px; box-sizing: border-box; border: 1px solid #111; background: #fff; flex: none; }
.lname { margin-left: 13px; color: #fff; font-style: italic; font-size: 12px; }
.llock { margin-left: auto; margin-right: 16px; }
.filemenu { position: absolute; left: 39px; top: 23px; width: 301px; height: 573px; box-sizing: border-box; padding-top: 3px; background: #f0f0f0; border: 1px solid #a4a4a4; box-shadow: 2px 2px 3px rgba(0,0,0,.45); color: #111; font: 12px/1 "Open Sans", "Noto Sans CJK SC", sans-serif; letter-spacing: .22px; }
.mrow { position: relative; height: 21px; margin: 0 2px; display: flex; align-items: center; justify-content: space-between; padding: 0 16px 0 19px; white-space: nowrap; }
.key { letter-spacing: .55px; }
.mrow.off { color: #7f7f7f; }
.mrow.active { background: #0078d7; color: #fff; }
.subarrow { position: absolute; right: 7px; top: 4px; border-left: 4px solid #111; border-top: 3.500px solid transparent; border-bottom: 3.500px solid transparent; }
.msep { display: flex; align-items: center; margin: 0 3px; }
.msep i { height: 1px; width: 100%; background: #a0a0a0; box-shadow: 0 1px 0 #fff; }
.overlay { position: absolute; left: 0; top: 0; pointer-events: none; }
.watermark { position: absolute; left: 1388px; top: 914px; width: 526px; height: 125px; background: #000; display: flex; }
.tag { width: 210px; height: 125px; background: #0068ff; border-radius: 26px; color: #fff; font: 700 102px/125px "Open Sans", sans-serif; text-align: center; letter-spacing: -2px; flex: none; }
.wm-right { flex: 1; display: flex; flex-direction: column; align-items: center; }
.wm-cn { color: #f00; font: 900 55px/62px "Noto Sans CJK SC", sans-serif; white-space: nowrap; margin-top: 5px; }
.wm-url { color: #1a6fe8; font: 700 41.500px/50px "Liberation Serif", serif; white-space: nowrap; margin-top: 2px; }
.wm-sliver { position: absolute; left: 528px; top: 96px; width: 2px; height: 20px; background: #fff; border-radius: 1px; }
</style>
